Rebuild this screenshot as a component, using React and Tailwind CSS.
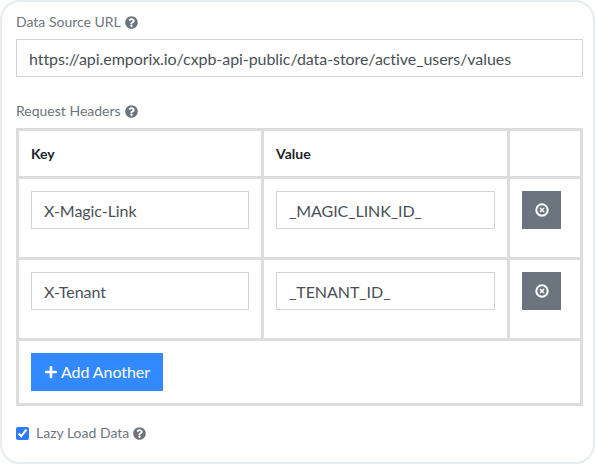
import React from "react";
import { FaPlus, FaQuestionCircle } from "react-icons/fa";

const rows = [
  { key: "X-Magic-Link", value: "_MAGIC_LINK_ID_" },
  { key: "X-Tenant", value: "_TENANT_ID_" },
];

// heavier ring than the icon packs' times-circle
const RemoveIcon = () => (
  <svg viewBox="0 0 14 14" className="w-[14px] h-[14px]" fill="none" stroke="currentColor">
    <circle cx="7" cy="7" r="5.7" strokeWidth="2" />
    <path d="M5 5l4 4M9 5l-4 4" strokeWidth="1.7" />
  </svg>
);

const TextBox = ({ value }) => (
  <input
    type="text"
    defaultValue={value}
    className="block w-full h-[38px] px-[12px] bg-white border border-[#ced4da] text-[#495057] text-base tracking-[-0.06px] outline-none"
  />
);

const Label = ({ children }) => (
  <div className="flex items-center gap-1 text-sm leading-[22px] text-[#6c757d]">
    {children}
    <FaQuestionCircle className="w-[13px] h-[13px] text-[#6c757d]" />
  </div>
);

const App = () => {
  return (
    <div className="w-[596px] h-[464px] bg-white font-['Lato',sans-serif]">
      <div className="w-[595px] h-[464px] pl-[14px] pr-[10px] pt-[9px] bg-white border-2 border-[#e3edf0] rounded-[20px]">
        <Label>Data Source URL</Label>
        <div className="mt-[6px]">
          <TextBox value="https://api.emporix.io/cxpb-api-public/data-store/active_users/values" />
        </div>

        <div className="mt-[23px]">
          <Label>Request Headers</Label>
        </div>

        {/* Headers table */}
        <table className="mt-[6px] w-[567px] table-fixed border-collapse border-[3px] border-[#dddddd] text-[#212529]">
          <colgroup>
            <col className="w-[245px]" />
            <col className="w-[246px]" />
            <col />
          </colgroup>
          <thead>
            <tr className="h-[48px]">
              <th className="border-[3px] border-[#dddddd] px-[12px] text-left text-sm font-bold">Key</th>
              <th className="border-[3px] border-[#dddddd] px-[12px] text-left text-sm font-bold">Value</th>
              <th className="border-[3px] border-[#dddddd]"></th>
            </tr>
          </thead>
          <tbody>
            {rows.map((row) => (
              <tr key={row.key} className="h-[81px]">
                <td className="border-[3px] border-[#dddddd] pl-[12px] pr-[12px] pt-[12px] pb-[28px] align-top">
                  <TextBox value={row.key} />
                </td>
                <td className="border-[3px] border-[#dddddd] pl-[12px] pr-[12px] pt-[12px] pb-[28px] align-top">
                  <TextBox value={row.value} />
                </td>
                <td className="border-[3px] border-[#dddddd] pl-[12px] pt-[12px] pb-[28px] align-top">
                  <button className="flex items-center justify-center w-[39px] h-[38px] bg-[#6c757d] text-white">
                    <RemoveIcon />
                  </button>
                </td>
              </tr>
            ))}
            <tr className="h-[65px]">
              <td colSpan={3} className="border-[3px] border-[#dddddd] pl-[12px] py-[12px]">
                <button className="flex items-center gap-[3px] w-[132px] h-[38px] px-[13px] bg-[#3389ff] text-white text-base tracking-[-0.06px] whitespace-nowrap">
                  <FaPlus className="w-[14px] h-[14px]" />
                  Add Another
                </button>
              </td>
            </tr>
          </tbody>
        </table>

        <label className="mt-[16px] flex items-center gap-[7px] text-sm leading-[22px] text-[#6c757d]">
          <input type="checkbox" defaultChecked className="m-0 w-[13px] h-[13px] accent-[#2f7bff]" />
          Lazy Load Data
          <FaQuestionCircle className="ml-[-3px] w-[13px] h-[13px]" />
        </label>
      </div>
    </div>
  );
};

export default App;
